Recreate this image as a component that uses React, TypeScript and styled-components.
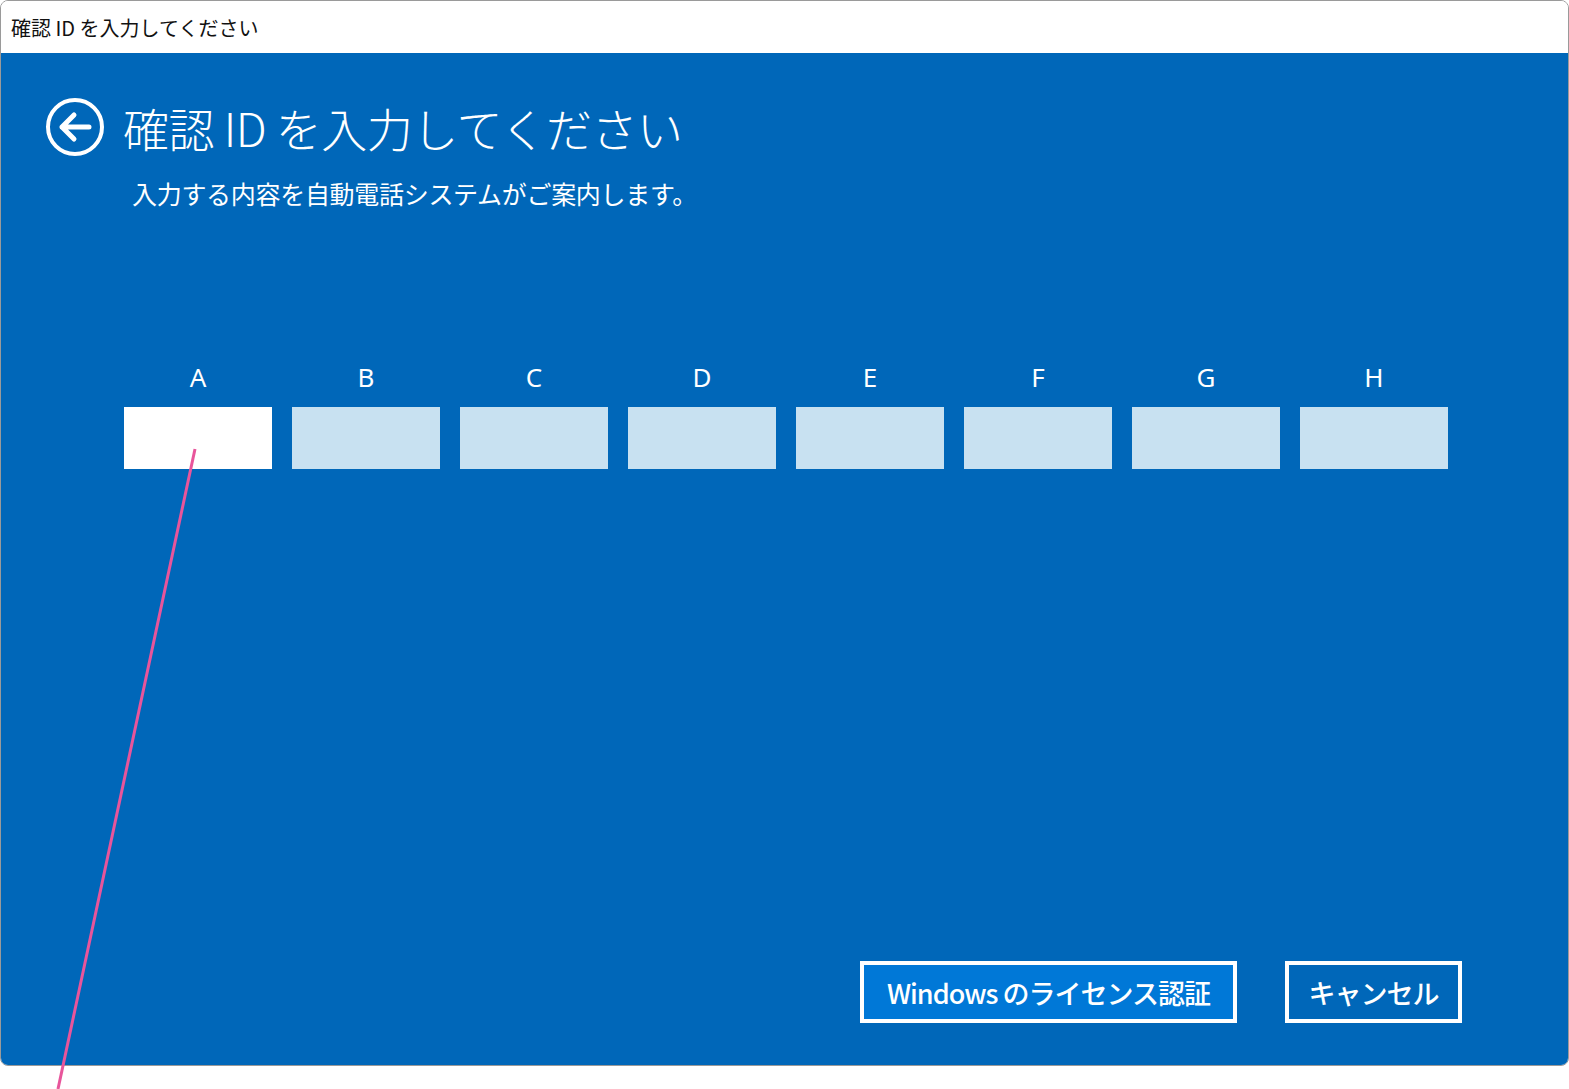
import styled, { createGlobalStyle } from "styled-components";

const Global = createGlobalStyle`
  html, body { margin: 0; padding: 0; background: #fff; }
  body { font-family: "Noto Sans CJK JP", "Noto Sans", sans-serif; }
`;

const Page = styled.div`
  position: relative;
  width: 1569px;
  height: 1089px;
  overflow: hidden;
  background: #fff;
`;

const Window = styled.div`
  width: 1567px;
  height: 1064px;
  border: 1px solid #9a9a9a;
  border-radius: 8px;
  overflow: hidden;
  display: flex;
  flex-direction: column;
`;

const TitleBar = styled.div`
  height: 52px;
  flex: none;
  display: flex;
  align-items: center;
  padding-left: 10px;
  background: #fff;
  color: #111;
  font-size: 20px;
`;

const Body = styled.div`
  flex: 1;
  background: #0067b9;
  color: #fff;
  display: flex;
  flex-direction: column;
  padding: 44px 0 42px 44px;
`;

const Header = styled.div`
  display: flex;
  align-items: center;
  gap: 18px;
`;

const Title = styled.h1`
  margin: 0;
  font-size: 46px;
  font-weight: 300;
  line-height: 60px;
  letter-spacing: -0.5px;
`;

const Subtitle = styled.p`
  margin: 18px 0 0 87px;
  font-size: 25px;
  font-weight: 400;
  letter-spacing: -0.3px;
`;

const Fields = styled.div`
  display: grid;
  grid-template-columns: repeat(8, 148px);
  column-gap: 20px;
  margin: 150px 0 0 79px;
`;

const Field = styled.div`
  display: flex;
  flex-direction: column;
  align-items: center;
  gap: 14px;
`;

const Label = styled.span`
  font-family: "Noto Sans", sans-serif;
  font-size: 26px;
  line-height: 32px;
`;

const Box = styled.div<{ $active?: boolean }>`
  width: 148px;
  height: 62px;
  background: ${({ $active }) => ($active ? "#ffffff" : "#c8e1f1")};
`;

const Actions = styled.div`
  margin-top: auto;
  display: flex;
  gap: 48px;
  padding-left: 815px;
`;

const Button = styled.button<{ $primary?: boolean }>`
  height: 62px;
  padding: 0;
  width: ${({ $primary }) => ($primary ? "377px" : "177px")};
  border: 4px solid #fff;
  background: ${({ $primary }) => ($primary ? "#0078d7" : "#0067b9")};
  color: #fff;
  font-family: "Noto Sans CJK JP", sans-serif;
  font-size: 27px;
  font-weight: 500;
  letter-spacing: -1px;
`;

const Annotation = styled.svg`
  position: absolute;
  left: 0;
  top: 0;
  pointer-events: none;
`;

const BackIcon = () => (
  <svg width="60" height="60" viewBox="0 0 60 60">
    <circle cx="30" cy="30" r="27" fill="none" stroke="#fff" strokeWidth="4" />
    <path d="M44 30H17M29 18L17 30l12 12" fill="none" stroke="#fff" strokeWidth="5" strokeLinecap="round" strokeLinejoin="round" />
  </svg>
);

const letters = ["A", "B", "C", "D", "E", "F", "G", "H"];

export default function App() {
  return (
    <Page>
      <Global />
      <Window>
        <TitleBar>確認 ID を入力してください</TitleBar>
        <Body>
          <Header>
            <BackIcon />
            <Title>確認 ID を入力してください</Title>
          </Header>
          <Subtitle>入力する内容を自動電話システムがご案内します。</Subtitle>
          <Fields>
            {letters.map((l, i) => (
              <Field key={l}>
                <Label>{l}</Label>
                <Box $active={i === 0} />
              </Field>
            ))}
          </Fields>
          <Actions>
            <Button $primary>Windows のライセンス認証</Button>
            <Button>キャンセル</Button>
          </Actions>
        </Body>
      </Window>
      <Annotation width="1569" height="1089">
        <line x1="195" y1="449" x2="58" y2="1089" stroke="#e8559b" strokeWidth="3" />
      </Annotation>
    </Page>
  );
}
